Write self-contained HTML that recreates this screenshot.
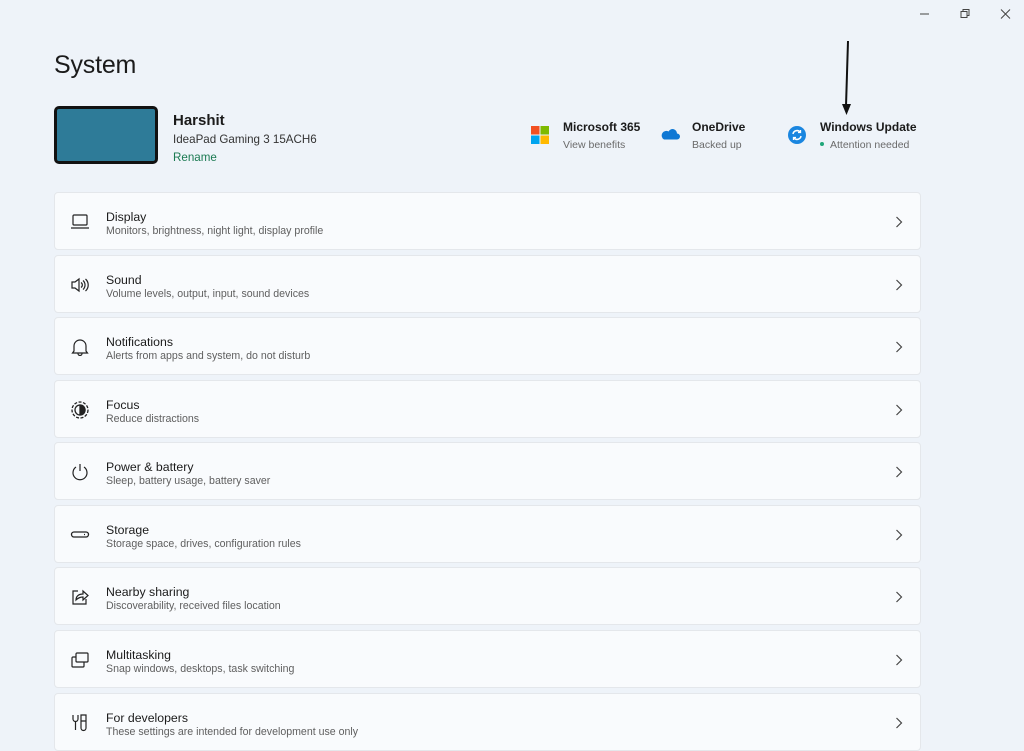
<!DOCTYPE html>
<html><head><meta charset="utf-8"><style>
*{margin:0;padding:0;box-sizing:border-box}
body{width:1024px;height:750px;background:#eef3f9;font-family:"Liberation Sans",sans-serif;color:#1b1b1b;position:relative;overflow:hidden}
.abs{position:absolute}
h1{position:absolute;left:54px;top:51px;font-size:25px;font-weight:normal;letter-spacing:-0.2px}
.card{position:absolute;left:54px;width:867px;height:58px;background:#f9fbfd;border:1px solid #e4e7eb;border-radius:4px}
.card .t{position:absolute;left:51px;top:17px;font-size:12.3px;color:#1b1b1b}
.card .s{position:absolute;left:51px;top:32px;font-size:10.6px;color:#5f5f5f}
.card svg.i{position:absolute;left:15px;top:20px}
.card .ch{position:absolute;right:17px;top:23px}
.sm{font-size:10.5px;color:#6a6a6a}
</style></head><body>
<svg class="abs" style="left:919px;top:8px" width="100" height="12" viewBox="0 0 100 12" fill="none" stroke="#444" stroke-width="1">
<line x1="1" y1="6" x2="10" y2="6"/>
<rect x="42" y="3.5" width="6" height="6"/><path d="M44 3.5V1.5h6v6h-2"/>
<path d="M82 1.5l9 9M91 1.5l-9 9"/>
</svg>
<h1>System</h1>
<div class="abs" style="left:54px;top:106px;width:104px;height:58px;background:#2e7b98;border:3px solid #111;border-radius:5px"></div>
<div class="abs" style="left:173px;top:112px;font-size:15px;font-weight:bold">Harshit</div>
<div class="abs" style="left:173px;top:133px;font-size:11.6px;color:#333">IdeaPad Gaming 3 15ACH6</div>
<div class="abs" style="left:173px;top:151px;font-size:11.6px;color:#1b7a52">Rename</div>

<svg class="abs" style="left:531px;top:126px" width="18" height="18"><rect x="0" y="0" width="8.5" height="8.5" fill="#f25022"/><rect x="9.5" y="0" width="8.5" height="8.5" fill="#7fba00"/><rect x="0" y="9.5" width="8.5" height="8.5" fill="#00a4ef"/><rect x="9.5" y="9.5" width="8.5" height="8.5" fill="#ffb900"/></svg>
<div class="abs" style="left:563px;top:120px;font-size:12px;font-weight:bold">Microsoft 365</div>
<div class="abs sm" style="left:563px;top:139px">View benefits</div>
<svg class="abs" style="left:660px;top:127px" width="20" height="13" viewBox="0 0 20 13"><path d="M4 12.5h13a3 3 0 0 0 0-6 4.5 4.5 0 0 0-8.5-2A3.8 3.8 0 0 0 4 12.5z" fill="#0f78d4"/></svg>
<div class="abs" style="left:692px;top:120px;font-size:12px;font-weight:bold">OneDrive</div>
<div class="abs sm" style="left:692px;top:139px">Backed up</div>
<svg class="abs" style="left:788px;top:126px" width="18" height="18" viewBox="0 0 18 18"><circle cx="9" cy="9" r="9" fill="#1a86e0"/><path d="M5 8a4 4 0 0 1 7-2M13 10a4 4 0 0 1-7 2" stroke="#fff" stroke-width="1.5" fill="none"/><path d="M12.5 4v2.5H10M5.5 14v-2.5H8" stroke="#fff" stroke-width="1.3" fill="none"/></svg>
<div class="abs" style="left:820px;top:120px;font-size:12px;font-weight:bold">Windows Update</div>
<div class="abs" style="left:820px;top:142px;width:4px;height:4px;border-radius:50%;background:#20a67a"></div>
<div class="abs sm" style="left:830px;top:139px">Attention needed</div>
<svg class="abs" style="left:840px;top:40px" width="14" height="76"><line x1="8" y1="1" x2="6" y2="66" stroke="#111" stroke-width="2"/><path d="M2 64l4.5 11L11 64z" fill="#111"/></svg>

<div class="card" style="top:192px"><svg class="i" width="20" height="18" fill="none" stroke="#222" stroke-width="1.2"><rect x="3" y="2" width="14" height="10" rx="1"/><line x1="1" y1="15" x2="19" y2="15"/></svg><div class="t">Display</div><div class="s">Monitors, brightness, night light, display profile</div><svg class="ch" width="8" height="12"><path d="M1.5 1l5 5-5 5" stroke="#444" fill="none" stroke-width="1.2"/></svg></div>
<div class="card" style="top:255px"><svg class="i" width="20" height="18" fill="none" stroke="#222" stroke-width="1.2"><path d="M2 6h3l4-3v12l-4-3H2z"/><path d="M11 6.5a3 3 0 0 1 0 5M13 4.5a6 6 0 0 1 0 9M15.5 3a8 8 0 0 1 0 12"/></svg><div class="t">Sound</div><div class="s">Volume levels, output, input, sound devices</div><svg class="ch" width="8" height="12"><path d="M1.5 1l5 5-5 5" stroke="#444" fill="none" stroke-width="1.2"/></svg></div>
<div class="card" style="top:317px"><svg class="i" width="20" height="18" fill="none" stroke="#222" stroke-width="1.2"><path d="M4 13V8a6 6 0 0 1 12 0v5l1.5 2h-15z"/><path d="M8 15.5a2 2 0 0 0 4 0"/></svg><div class="t">Notifications</div><div class="s">Alerts from apps and system, do not disturb</div><svg class="ch" width="8" height="12"><path d="M1.5 1l5 5-5 5" stroke="#444" fill="none" stroke-width="1.2"/></svg></div>
<div class="card" style="top:380px"><svg class="i" width="20" height="18" fill="none" stroke="#222" stroke-width="1.3"><circle cx="10" cy="9" r="8" stroke-dasharray="3 1.5"/><circle cx="10" cy="9" r="5"/><path d="M10 4a5 5 0 0 1 0 10z" fill="#222"/></svg><div class="t">Focus</div><div class="s">Reduce distractions</div><svg class="ch" width="8" height="12"><path d="M1.5 1l5 5-5 5" stroke="#444" fill="none" stroke-width="1.2"/></svg></div>
<div class="card" style="top:442px"><svg class="i" width="20" height="18" fill="none" stroke="#222" stroke-width="1.2"><path d="M6 4a7 7 0 1 0 8 0"/><line x1="10" y1="1" x2="10" y2="8"/></svg><div class="t">Power &amp; battery</div><div class="s">Sleep, battery usage, battery saver</div><svg class="ch" width="8" height="12"><path d="M1.5 1l5 5-5 5" stroke="#444" fill="none" stroke-width="1.2"/></svg></div>
<div class="card" style="top:505px"><svg class="i" width="20" height="18" fill="none" stroke="#222" stroke-width="1.3"><rect x="1.5" y="6" width="17" height="5" rx="2.5"/><line x1="14" y1="8.5" x2="15" y2="8.5"/></svg><div class="t">Storage</div><div class="s">Storage space, drives, configuration rules</div><svg class="ch" width="8" height="12"><path d="M1.5 1l5 5-5 5" stroke="#444" fill="none" stroke-width="1.2"/></svg></div>
<div class="card" style="top:567px"><svg class="i" width="20" height="18" fill="none" stroke="#222" stroke-width="1.2"><path d="M8 3H3v13h13v-5"/><path d="M6 12c0-4 3-6 7-6V3l5 4.5-5 4.5V9c-3 0-5 1-7 3z"/></svg><div class="t">Nearby sharing</div><div class="s">Discoverability, received files location</div><svg class="ch" width="8" height="12"><path d="M1.5 1l5 5-5 5" stroke="#444" fill="none" stroke-width="1.2"/></svg></div>
<div class="card" style="top:630px"><svg class="i" width="20" height="18" fill="none" stroke="#222" stroke-width="1.2"><rect x="6" y="2" width="12" height="9" rx="1"/><path d="M6 6H3a1 1 0 0 0-1 1v8a1 1 0 0 0 1 1h10a1 1 0 0 0 1-1v-4"/></svg><div class="t">Multitasking</div><div class="s">Snap windows, desktops, task switching</div><svg class="ch" width="8" height="12"><path d="M1.5 1l5 5-5 5" stroke="#444" fill="none" stroke-width="1.2"/></svg></div>
<div class="card" style="top:693px"><svg class="i" width="20" height="18" fill="none" stroke="#222" stroke-width="1.2"><path d="M3 1v4a2.5 2.5 0 0 0 5 0V1M5.5 7v9M11 1h5v6h-5zM11 7v7a2.5 2.5 0 0 0 5 0V7"/></svg><div class="t">For developers</div><div class="s">These settings are intended for development use only</div><svg class="ch" width="8" height="12"><path d="M1.5 1l5 5-5 5" stroke="#444" fill="none" stroke-width="1.2"/></svg></div>
</body></html>
